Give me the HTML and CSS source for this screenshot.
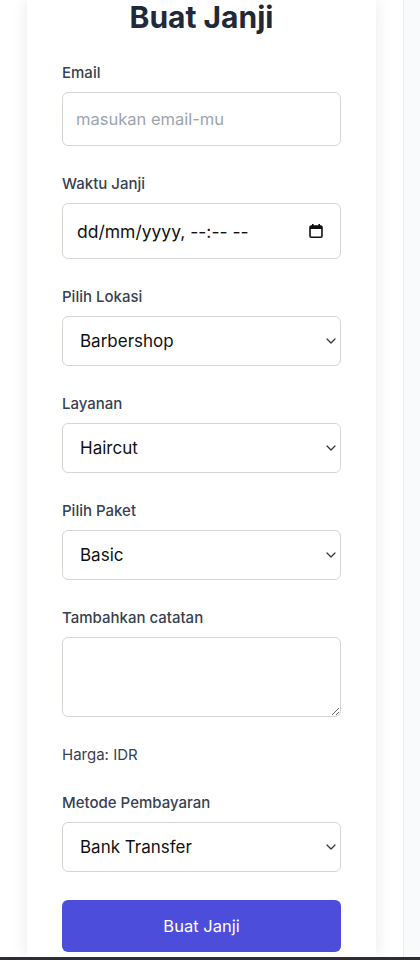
FILE: index.html
```html
<!DOCTYPE html>
<html lang="id">
<head>
<meta charset="utf-8">
<title>Buat Janji</title>
<link rel="stylesheet" href="styles.css">
</head>
<body>
<div class="screen">
  <main class="main">
    <section class="card">
      <h1 class="title">Buat Janji</h1>
      <form class="form">
        <div class="field">
          <label class="label" for="email">Email</label>
          <input class="control control-email" id="email" type="email" placeholder="masukan email-mu">
        </div>
        <div class="field">
          <label class="label" for="waktu">Waktu Janji</label>
          <div class="control control-date" id="waktu">
            <span class="date-text">dd/mm/yyyy, --:-- --</span>
            <svg class="cal-icon" width="14" height="14" viewBox="0 0 14 14" aria-hidden="true">
              <rect x="3" y="0" width="1.6" height="3" fill="#111"/>
              <rect x="9.4" y="0" width="1.6" height="3" fill="#111"/>
              <rect x="1" y="2" width="12" height="11.2" rx="1.2" fill="none" stroke="#111" stroke-width="1.6"/>
              <rect x="1" y="2" width="12" height="3" fill="#111"/>
            </svg>
          </div>
        </div>
        <div class="field">
          <label class="label" for="lokasi">Pilih Lokasi</label>
          <div class="select-wrap">
            <select class="control control-select" id="lokasi"><option>Barbershop</option></select>
            <svg class="chev" width="10" height="6" viewBox="0 0 10 6" aria-hidden="true"><path d="M1 1 L5 5 L9 1" fill="none" stroke="#333" stroke-width="1.2" stroke-linecap="round" stroke-linejoin="round"/></svg>
          </div>
        </div>
        <div class="field">
          <label class="label" for="layanan">Layanan</label>
          <div class="select-wrap">
            <select class="control control-select" id="layanan"><option>Haircut</option></select>
            <svg class="chev" width="10" height="6" viewBox="0 0 10 6" aria-hidden="true"><path d="M1 1 L5 5 L9 1" fill="none" stroke="#333" stroke-width="1.2" stroke-linecap="round" stroke-linejoin="round"/></svg>
          </div>
        </div>
        <div class="field">
          <label class="label" for="paket">Pilih Paket</label>
          <div class="select-wrap">
            <select class="control control-select" id="paket"><option>Basic</option></select>
            <svg class="chev" width="10" height="6" viewBox="0 0 10 6" aria-hidden="true"><path d="M1 1 L5 5 L9 1" fill="none" stroke="#333" stroke-width="1.2" stroke-linecap="round" stroke-linejoin="round"/></svg>
          </div>
        </div>
        <div class="field">
          <label class="label" for="catatan">Tambahkan catatan</label>
          <textarea class="control control-textarea" id="catatan"></textarea>
        </div>
        <p class="price">Harga: IDR</p>
        <div class="field">
          <label class="label" for="bayar">Metode Pembayaran</label>
          <div class="select-wrap">
            <select class="control control-select" id="bayar"><option>Bank Transfer</option></select>
            <svg class="chev" width="10" height="6" viewBox="0 0 10 6" aria-hidden="true"><path d="M1 1 L5 5 L9 1" fill="none" stroke="#333" stroke-width="1.2" stroke-linecap="round" stroke-linejoin="round"/></svg>
          </div>
        </div>
        <button class="submit" type="button">Buat Janji</button>
      </form>
    </section>
  </main>
  <div class="scrollbar"></div>
</div>
<div class="dock"></div>
</body>
</html>
```

FILE: styles.css
```css
* {
  box-sizing: border-box;
}

html, body {
  margin: 0;
  padding: 0;
}

body {
  width: 420px;
  height: 960px;
  overflow: hidden;
  display: flex;
  flex-direction: column;
  background: #ffffff;
  font-family: "Inter", "Liberation Sans", sans-serif;
  color: #374151;
}

.screen {
  flex: 1;
  display: flex;
  min-height: 0;
}

.main {
  flex: 1;
  display: flex;
  justify-content: center;
  background: #ffffff;
}

.scrollbar {
  width: 17px;
  background: #f9fafb;
  border-left: 1px solid #ececee;
}

.card {
  width: 349px;
  background: #ffffff;
  padding: 0 35px;
  box-shadow: 0 0 16px rgba(0, 0, 0, 0.09);
}

.title {
  margin: 0 0 29px;
  font-size: 30px;
  line-height: 34px;
  font-weight: 700;
  text-align: center;
  color: #1f2937;
}

.form {
  display: flex;
  flex-direction: column;
  gap: 28px;
}

.field {
  display: flex;
  flex-direction: column;
  gap: 9px;
}

.label {
  font-size: 15px;
  line-height: 20px;
  font-weight: 500;
  color: #374151;
}

.control {
  display: block;
  width: 100%;
  margin: 0;
  border: 1px solid #d4d5da;
  border-radius: 6px;
  background: #ffffff;
  font-family: "Inter", "Liberation Sans", sans-serif;
  font-size: 16.5px;
  color: #111111;
  outline: none;
}

.control-email {
  height: 54px;
  padding: 0 13px;
}

.control-email::placeholder {
  color: #9ca3af;
}

.control-date {
  height: 56px;
  padding: 0 17px 0 14px;
  display: flex;
  align-items: center;
  justify-content: space-between;
}

.date-text {
  font-size: 17.5px;
  color: #111111;
}

.select-wrap {
  position: relative;
}

.control-select {
  height: 50px;
  padding: 0 30px 0 17px;
  appearance: none;
  -webkit-appearance: none;
  font-size: 17px;
}

.chev {
  position: absolute;
  right: 5px;
  top: 22px;
}

.control-textarea {
  height: 80px;
  padding: 10px 13px;
  resize: vertical;
}

.price {
  margin: 0;
  font-size: 15px;
  line-height: 20px;
  color: #374151;
}

.submit {
  height: 52px;
  width: 100%;
  border: none;
  border-radius: 6px;
  background: #4c4edb;
  color: #ffffff;
  font-family: "Inter", "Liberation Sans", sans-serif;
  font-size: 16.5px;
  cursor: pointer;
}

.dock {
  height: 3px;
  background: #2b2e34;
}
```
